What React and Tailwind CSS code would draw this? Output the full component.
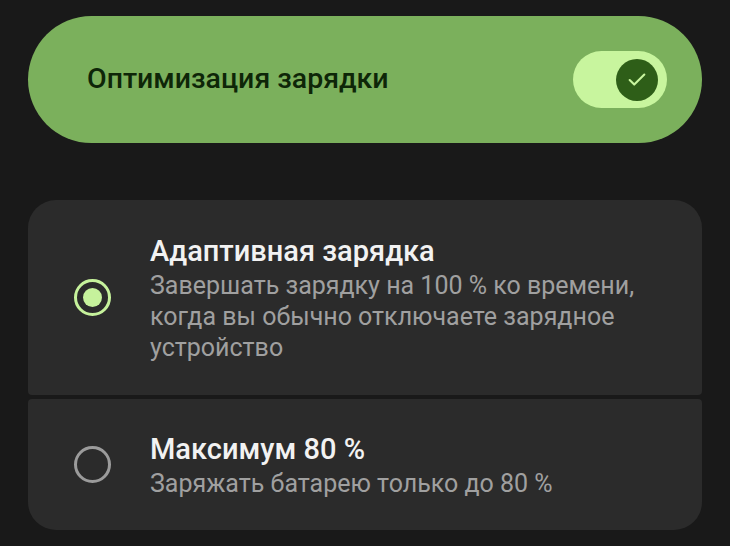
import { Check } from 'lucide-react'

function Radio({ checked }) {
  return checked ? (
    <span className="flex h-[37px] w-[37px] shrink-0 items-center justify-center rounded-full border-[3px] border-[#c6f29c]">
      <span className="h-[19px] w-[19px] rounded-full bg-[#c6f29c]" />
    </span>
  ) : (
    <span className="h-[37px] w-[37px] shrink-0 rounded-full border-[3px] border-[#9b9b9b]" />
  )
}

function Option({ checked, title, subtitle, className }) {
  return (
    <div className={`flex items-center bg-[#2b2b2b] pl-[46px] ${className}`}>
      <Radio checked={checked} />
      <div className="ml-[39px] flex w-[505px] flex-col">
        <div className="text-[29px] font-medium leading-[36px] text-[#f2f2f2]">{title}</div>
        <div className="mt-[1px] text-[25px] leading-[31px] text-[#a0a0a0]">{subtitle}</div>
      </div>
    </div>
  )
}

export default function App() {
  return (
    <div
      className="h-[546px] w-[730px] overflow-hidden bg-[#191919] px-[28px] pt-[16px]"
      style={{ fontFamily: 'Roboto, "Noto Sans", sans-serif' }}
    >
      <div className="flex h-[127px] items-center justify-between rounded-full bg-[#7bb05c] pl-[59px] pr-[35px]">
        <span className="text-[28.5px] font-medium text-[#0e2608]">Оптимизация зарядки</span>
        <div className="flex h-[57px] w-[94px] items-center justify-end rounded-full bg-[#c8f59e] pr-[9px]">
          <span className="flex h-[42px] w-[42px] items-center justify-center rounded-full bg-[#2e5e18]">
            <Check size={22} strokeWidth={2.3} className="text-[#c8f59e]" />
          </span>
        </div>
      </div>

      <div className="mt-[57px] flex flex-col gap-[4px]">
        <Option
          checked
          title="Адаптивная зарядка"
          subtitle="Завершать зарядку на 100 % ко времени, когда вы обычно отключаете зарядное устройство"
          className="h-[195px] rounded-t-[28px] rounded-b-[4px]"
        />
        <Option
          title="Максимум 80 %"
          subtitle="Заряжать батарею только до 80 %"
          className="h-[131px] rounded-t-[4px] rounded-b-[28px]"
        />
      </div>
    </div>
  )
}
